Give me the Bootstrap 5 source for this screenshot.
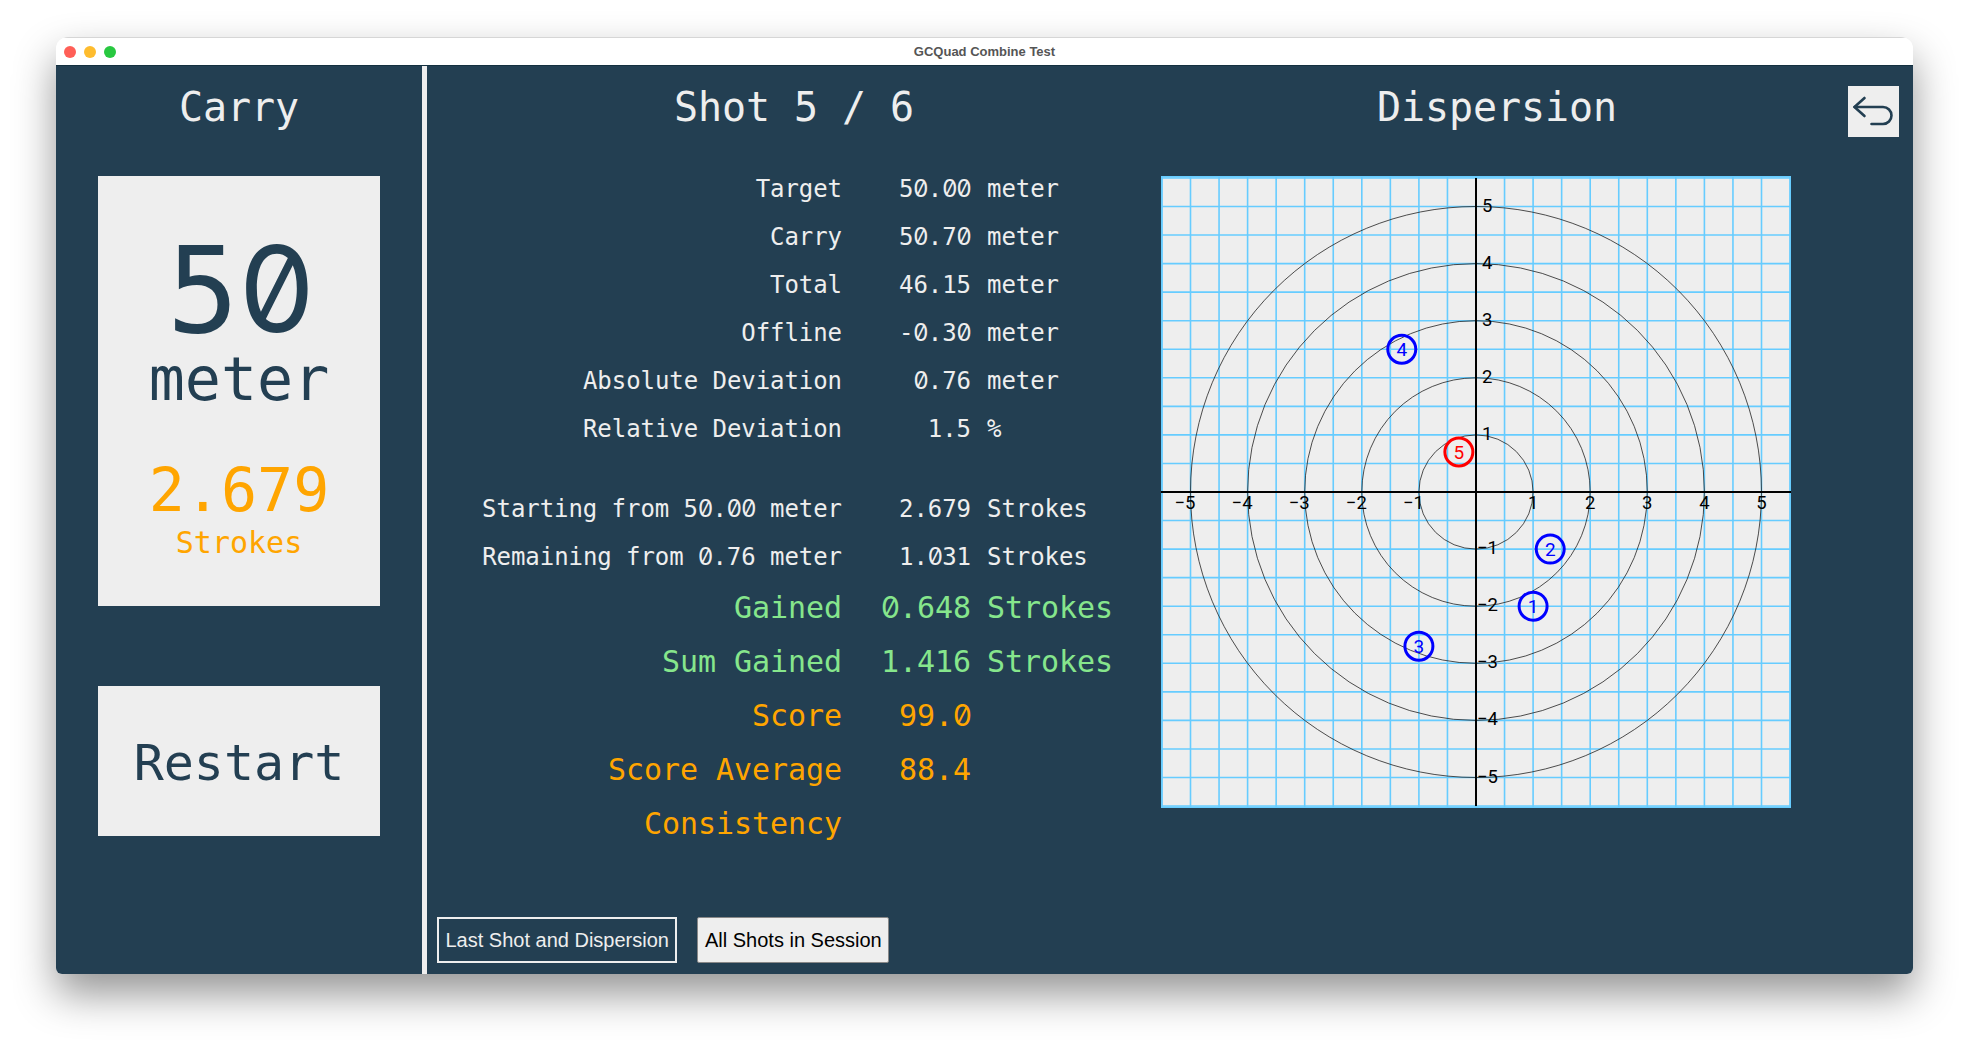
<!doctype html>
<html lang="en">

<head>
    <meta charset="utf-8">
    <meta name="viewport" content="width=device-width, initial-scale=1">
    <title>GCQuad Combine Test</title>
    <link href="https://cdn.jsdelivr.net/npm/bootstrap@5.3.5/dist/css/bootstrap.min.css" rel="stylesheet">
    <style>
        body {
            background-color: #fff;
            padding: 37px 57px 74px 56px;
            height: 1048px;
            overflow: hidden;
            font-family: "DejaVu Sans Mono", "Liberation Mono", monospace;
        }

        .app-window {
            height: 937px;
            border-radius: 12px 12px 6px 6px;
            overflow: hidden;
            box-shadow: 0 20px 42px rgba(0, 0, 0, 0.42);
        }

        .title-bar {
            height: 29px;
            background-color: #fff;
            border-top: 1px solid #d6d6d6;
            border-bottom: 1px solid #14303f;
            font: bold 13px "Liberation Sans", sans-serif;
            color: #555;
        }

        .lights {
            left: 8px;
            top: 8px;
        }

        .light {
            width: 12px;
            height: 12px;
            border-radius: 50%;
        }

        .app-body {
            height: 908px;
            background-color: #233f52;
            color: #eee;
        }

        .side-panel {
            width: 366px;
        }

        .split-bar {
            width: 5px;
            background-color: #eee;
        }

        .main-panel {
            width: 1486px;
        }

        .pane-title {
            font-size: 40px;
            line-height: 42px;
            padding-top: 20px;
            letter-spacing: -0.1px;
        }

        /* slashed zero, the mono font only has a dotted one */
        .zero-glyph {
            display: inline-block;
            width: 0.602em;
            line-height: 1;
            text-align: center;
            font-family: Inter, sans-serif;
            font-feature-settings: "zero" 1;
        }

        .carry-box {
            width: 282px;
            height: 430px;
            margin-top: 48px;
            background-color: #eee;
            color: #233f52;
            padding-top: 53px;
        }

        .carry-num {
            font-size: 120px;
            line-height: 116px;
        }

        .carry-unit {
            font-size: 60px;
            line-height: 60px;
        }

        .carry-strokes {
            font-size: 60px;
            line-height: 60px;
            margin-top: 51px;
            color: #ffa500;
        }

        .carry-label {
            font-size: 30px;
            line-height: 40px;
            padding-top: 3px;
            color: #ffa500;
        }

        .restart-box {
            width: 282px;
            height: 150px;
            margin-top: 80px;
            padding-top: 5px;
            background-color: #eee;
            color: #233f52;
            font-size: 50px;
        }

        .stat-col {
            width: 734px;
        }

        .stat-list {
            margin-top: 37px;
        }

        .stat-row {
            height: 48px;
            line-height: 48px;
            font-size: 24px;
            letter-spacing: -0.06px;
            white-space: nowrap;
        }

        .stat-row.big {
            height: 54px;
            line-height: 54px;
            font-size: 30px;
        }

        .stat-row.gap-after {
            margin-bottom: 32px;
        }

        .stat-label {
            width: 415px;
            text-align: right;
        }

        .stat-value {
            width: 129px;
            text-align: right;
        }

        .stat-unit {
            margin-left: 16px;
        }

        .tone-green {
            color: #86e68c;
        }

        .tone-orange {
            color: #ffa500;
        }

        .plot-col {
            width: 630px;
        }

        .plot-title {
            padding-left: 42px;
        }

        .plot {
            display: block;
            margin-top: 48px;
            font-family: Roboto, sans-serif;
        }

        .back-col {
            padding-left: 57px;
        }

        .back-btn {
            width: 51px;
            height: 51px;
            margin-top: 20px;
            background-color: #eee;
        }

        .view-bar {
            padding: 0 0 11px 10px;
            gap: 20px;
        }

        .view-btn {
            height: 46px;
            padding: 0 6.5px;
            font: 20px "Liberation Sans", sans-serif;
            border-radius: 0;
            border: 2px solid #eee;
            color: #eee;
            background-color: transparent;
        }

        .view-btn.active-view {
            color: #000;
            background-color: #eee;
            border: 1px solid #888;
            border-radius: 2px;
        }
    </style>
</head>

<body>

    <div class="app-window d-flex flex-column">
        <div class="title-bar position-relative d-flex align-items-center justify-content-center flex-shrink-0">
            <div class="lights position-absolute d-flex gap-2">
                <span class="light" style="background-color:#ff5f57"></span>
                <span class="light" style="background-color:#febc2e"></span>
                <span class="light" style="background-color:#28c840"></span>
            </div>
            GCQuad Combine Test
        </div>

        <div class="app-body d-flex">
            <div class="side-panel d-flex flex-column align-items-center">
                <div class="pane-title">Carry</div>
                <div class="carry-box text-center">
                    <div class="carry-num">5<span class="zero-glyph">0</span></div>
                    <div class="carry-unit">meter</div>
                    <div class="carry-strokes">2.679</div>
                    <div class="carry-label">Strokes</div>
                </div>
                <div class="restart-box d-flex align-items-center justify-content-center">Restart</div>
            </div>

            <div class="split-bar"></div>

            <div class="main-panel d-flex flex-column">
                <div class="d-flex flex-grow-1">
                    <div class="stat-col">
                        <div class="pane-title text-center">Shot 5 / 6</div>
                        <div class="stat-list" id="stats"></div>
                    </div>
                    <div class="plot-col">
                        <div class="pane-title plot-title text-center">Dispersion</div>
                        <svg class="plot" id="plot" width="630" height="632" viewBox="0 0 630 632"></svg>
                    </div>
                    <div class="back-col">
                        <div class="back-btn d-flex align-items-center justify-content-center">
                            <svg width="51" height="51" viewBox="0 0 51 51" fill="none" stroke="#233f52" stroke-width="2.6" stroke-linecap="round" stroke-linejoin="round">
                                <path d="M16.5 12 L6.5 21 L16.5 30"/>
                                <path d="M6.5 21 H35 A8.5 8.5 0 0 1 35 38 H23.5"/>
                            </svg>
                        </div>
                    </div>
                </div>
                <div class="d-flex view-bar">
                    <button class="btn view-btn">Last Shot and Dispersion</button>
                    <button class="btn view-btn active-view">All Shots in Session</button>
                </div>
            </div>
        </div>
    </div>

    <script>
        var rows = [
            ["Target", "50.00", "meter"],
            ["Carry", "50.70", "meter"],
            ["Total", "46.15", "meter"],
            ["Offline", "-0.30", "meter"],
            ["Absolute Deviation", "0.76", "meter"],
            ["Relative Deviation", "1.5", "%", "gap-after"],
            ["Starting from 50.00 meter", "2.679", "Strokes"],
            ["Remaining from 0.76 meter", "1.031", "Strokes"],
            ["Gained", "0.648", "Strokes", "big tone-green"],
            ["Sum Gained", "1.416", "Strokes", "big tone-green"],
            ["Score", "99.0", "", "big tone-orange"],
            ["Score Average", "88.4", "", "big tone-orange"],
            ["Consistency", "", "", "big tone-orange"]
        ];

        function zeros(txt) {
            return txt.replace(/0/g, '<span class="zero-glyph">0</span>');
        }

        var html = "";
        for (var i = 0; i < rows.length; i++) {
            var r = rows[i];
            html += '<div class="stat-row d-flex ' + (r[3] || "") + '">' +
                '<div class="stat-label">' + zeros(r[0]) + '</div>' +
                '<div class="stat-value">' + zeros(r[1]) + '</div>' +
                '<div class="stat-unit">' + r[2] + '</div></div>';
        }
        document.getElementById("stats").innerHTML = html;

        // plot: origin at (315,316), one unit = 57.1px
        var ox = 315, oy = 316, unit = 57.1;
        var s = '<rect width="630" height="632" fill="#eee"/>';
        for (var k = -11; k <= 11; k++) {
            var gx = ox + k * unit / 2, gy = oy + k * unit / 2;
            s += '<line x1="' + gx + '" y1="0" x2="' + gx + '" y2="632" stroke="#66ccff" stroke-width="1.6"/>';
            s += '<line x1="0" y1="' + gy + '" x2="630" y2="' + gy + '" stroke="#66ccff" stroke-width="1.6"/>';
        }
        s += '<rect x="0.75" y="0.75" width="628.5" height="630.5" fill="none" stroke="#66ccff" stroke-width="1.5"/>';
        for (var c = 1; c <= 5; c++) {
            s += '<circle cx="' + ox + '" cy="' + oy + '" r="' + c * unit + '" fill="none" stroke="#222" stroke-width="0.8"/>';
        }
        s += '<line x1="' + ox + '" y1="2" x2="' + ox + '" y2="630" stroke="#000" stroke-width="2"/>';
        s += '<line x1="0" y1="' + oy + '" x2="630" y2="' + oy + '" stroke="#000" stroke-width="2"/>';
        for (var n = -5; n <= 5; n++) {
            if (n == 0) continue;
            var lx = ox + n * unit, ly = oy - n * unit;
            s += '<text x="' + (n < 0 ? lx + 5 : lx) + '" y="' + (oy + 16.5) + '" font-size="18.5" text-anchor="' + (n < 0 ? "end" : "middle") + '">' + (n < 0 ? "\u2212" + (-n) : n) + '</text>';
            s += '<text x="' + (n < 0 ? ox + 1 : ox + 6) + '" y="' + (ly + 5) + '" font-size="18.5">' + (n < 0 ? "\u2212" + (-n) : n) + '</text>';
        }
        var shots = [[1, -2], [1.3, -1], [-1, -2.7], [-1.3, 2.5], [-0.3, 0.7]];
        for (var j = 0; j < shots.length; j++) {
            var col = j == 4 ? "#f00" : "#00f";
            var cx = ox + shots[j][0] * unit, cy = oy - shots[j][1] * unit;
            s += '<circle cx="' + cx + '" cy="' + cy + '" r="14" fill="none" stroke="' + col + '" stroke-width="3"/>';
            s += '<text x="' + cx + '" y="' + (cy + 6.5) + '" font-size="19" text-anchor="middle" fill="' + col + '">' + (j + 1) + '</text>';
        }
        document.getElementById("plot").innerHTML = s;
    </script>

    <script src="https://cdn.jsdelivr.net/npm/bootstrap@5.3.5/dist/js/bootstrap.bundle.min.js"></script>

</body>

</html>
